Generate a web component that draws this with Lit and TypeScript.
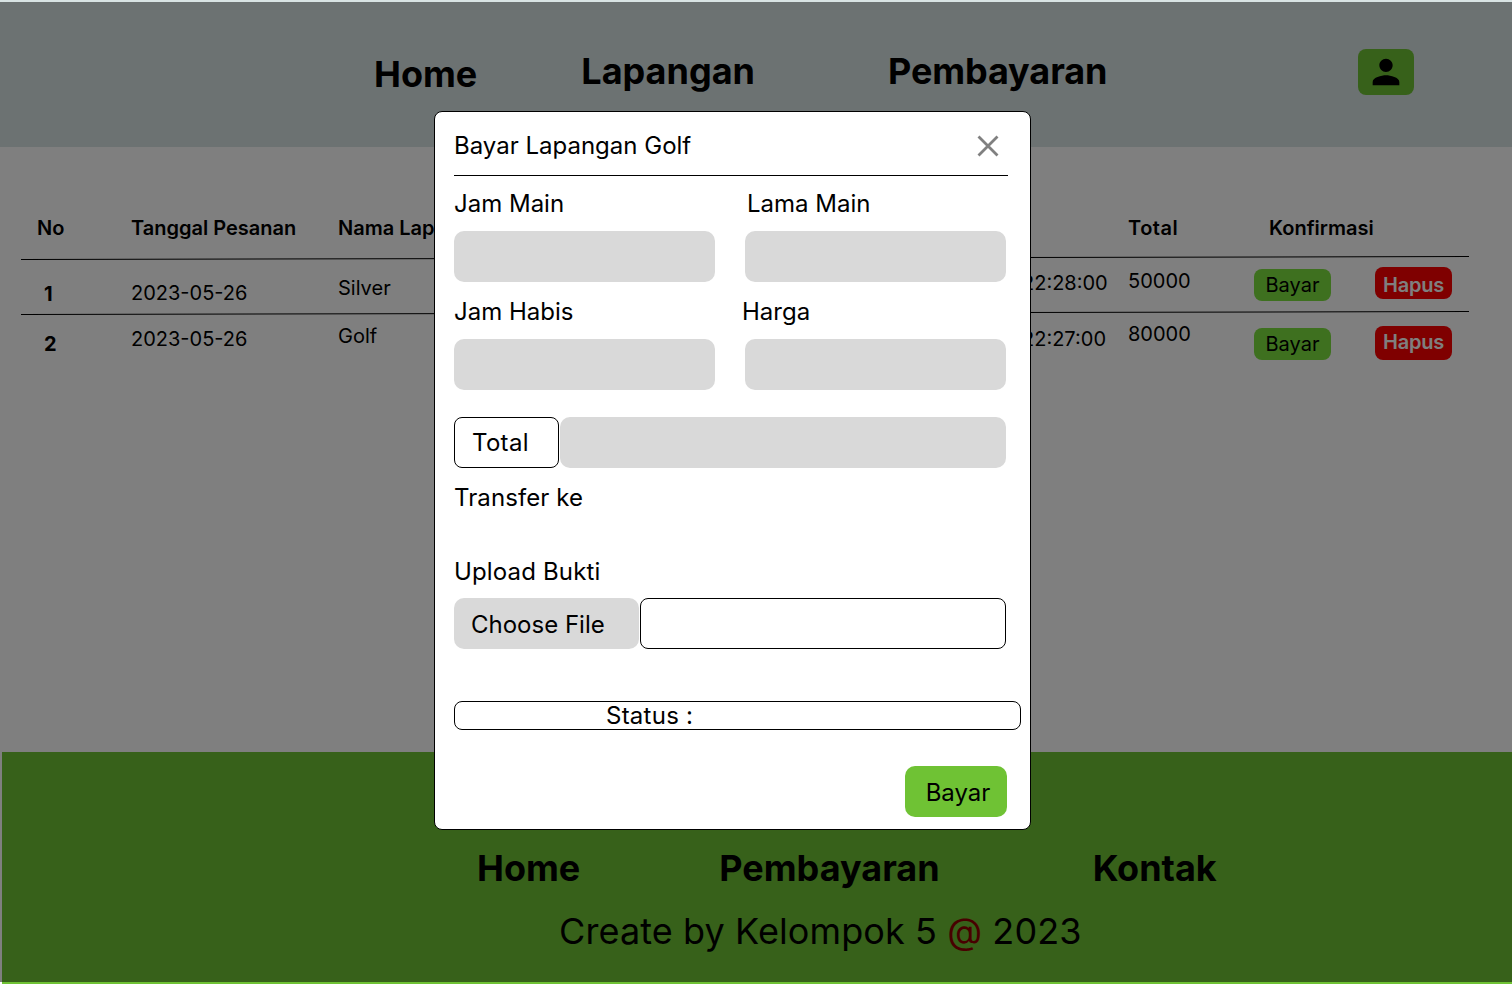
import { LitElement, html, css } from "lit";
import { customElement } from "lit/decorators.js";

// margin-top of each cell inside its row, taken from the picture
const rows = [
  { no: "1", date: "2023-05-26", name: "Silver", time: "22:28:00", total: "50000", tops: [23, 22, 17, 12, 10, 10, 8], height: 54 },
  { no: "2", date: "2023-05-26", name: "Golf", time: "22:27:00", total: "80000", tops: [18, 13, 10, 13, 8, 14, 12], height: 60 },
];

@customElement("app-root")
export class AppRoot extends LitElement {
  static styles = css`
    :host {
      display: block;
      position: relative;
      width: 1512px;
      height: 984px;
      overflow: hidden;
      background: #fff;
      font-family: Inter, "Liberation Sans", sans-serif;
      color: #000;
    }

    .top {
      display: flex;
      align-items: center;
      height: 147px;
      padding: 0 0 6px 374px;
      box-sizing: border-box;
      background: #d9e4e4;
      font-size: 36px;
      font-weight: 700;
    }
    .top .home {
      margin-top: 6px;
    }
    .top .lapangan {
      margin-left: 104px;
    }
    .top .pembayaran {
      margin-left: 133px;
      letter-spacing: -0.1px;
    }
    .user {
      display: flex;
      align-items: center;
      justify-content: center;
      width: 56px;
      height: 46px;
      margin-left: 251px;
      margin-top: 3px;
      border-radius: 8px;
      background: #6fc234;
    }

    .content {
      height: 605px;
      padding: 69px 0 0 21px;
      box-sizing: border-box;
    }
    .row {
      display: grid;
      grid-template-columns: 94px 207px 684px 106px 126px 121px 77px;
      padding-left: 16px;
      font-size: 20px;
      line-height: 24px;
    }
    .row.heads {
      height: 42px;
      font-weight: 600;
    }
    .row.heads .konfirmasi {
      grid-column: 6 / span 2;
      margin-left: 15px;
    }
    .row.heads .total-head {
      grid-column: 5;
      letter-spacing: 0.5px;
    }
    .no {
      font-weight: 700;
      margin-left: 7px;
    }
    .line {
      width: 1448px;
      height: 1px;
      background: #000;
      transform: translateY(-0.5px) rotate(-0.11deg);
    }
    .pill {
      width: 77px;
      height: 32px;
      line-height: 32px;
      border-radius: 8px;
      text-align: center;
    }
    .pill.pay {
      background: #7ce03e;
    }
    .pill.del {
      background: #ff0000;
      color: #fff;
      font-weight: 600;
      letter-spacing: -0.2px;
    }
    .pill.del.low {
      line-height: 36px;
    }
    .pill.del.tall {
      height: 34px;
    }

    .foot {
      height: 232px;
      margin-left: 2px;
      padding: 94px 0 0 475px;
      box-sizing: border-box;
      background: #6fc234;
      font-size: 36px;
      line-height: 44px;
    }
    .foot nav {
      display: flex;
      font-weight: 700;
    }
    .foot nav span:nth-child(2) {
      margin-left: 139px;
    }
    .foot nav span:nth-child(3) {
      margin-left: 153px;
    }
    .foot p {
      margin: 19px 0 0 82px;
      letter-spacing: 0.1px;
    }
    .foot em {
      font-style: normal;
      color: #900000;
    }

    .backdrop {
      position: absolute;
      inset: 2px 0;
      background: rgba(0, 0, 0, 0.5);
    }

    .modal {
      position: absolute;
      left: 434px;
      top: 111px;
      width: 597px;
      height: 719px;
      padding-left: 19px;
      box-sizing: border-box;
      border: 1px solid #000;
      border-radius: 8px;
      background: #fff;
      font-size: 24px;
      line-height: 29px;
    }
    .title {
      display: flex;
      align-items: flex-end;
      justify-content: space-between;
      width: 554px;
      height: 63px;
      padding-bottom: 15px;
      box-sizing: border-box;
    }
    .title svg {
      margin: 0 6px 0 0;
    }
    .rule {
      width: 554px;
      height: 1px;
      background: #000;
    }
    .fields {
      display: grid;
      grid-template-columns: 261px 261px;
      column-gap: 30px;
    }
    .label {
      margin-top: 13px;
    }
    .label.second {
      margin-top: 15px;
    }
    .label.lama {
      margin-left: 2px;
    }
    .label.harga {
      margin-left: -3px;
    }
    .box {
      height: 51px;
      margin-top: 13px;
      border-radius: 10px;
      background: #d9d9d9;
    }
    .total {
      display: flex;
      gap: 1px;
      width: 552px;
      margin-top: 27px;
    }
    .total .tag {
      width: 105px;
      height: 51px;
      padding-left: 17px;
      box-sizing: border-box;
      border: 1px solid #000;
      border-radius: 8px;
      line-height: 49px;
      letter-spacing: 0.3px;
    }
    .total .box {
      flex: 1;
      margin-top: 0;
    }
    .transfer {
      margin: 15px 0 0 0;
      letter-spacing: 0.1px;
    }
    .upload {
      margin-top: 45px;
      letter-spacing: 0.15px;
    }
    .file {
      display: flex;
      gap: 1px;
      width: 552px;
      margin-top: 12px;
    }
    .file .choose {
      width: 185px;
      height: 51px;
      padding-left: 17px;
      box-sizing: border-box;
      border-radius: 10px;
      background: #d9d9d9;
      line-height: 53px;
    }
    .file .name {
      flex: 1;
      border: 1px solid #000;
      border-radius: 8px;
    }
    .status {
      width: 567px;
      height: 29px;
      margin-top: 52px;
      padding-left: 151px;
      box-sizing: border-box;
      border: 1px solid #000;
      border-radius: 8px;
      line-height: 27px;
      letter-spacing: 0.25px;
    }
    .submit {
      width: 102px;
      height: 51px;
      margin: 36px 0 0 451px;
      padding-left: 4px;
      box-sizing: border-box;
      border-radius: 10px;
      background: #6fc234;
      text-align: center;
      line-height: 53px;
    }
  `;

  render() {
    return html`
      <header class="top">
        <span class="home">Home</span>
        <span class="lapangan">Lapangan</span>
        <span class="pembayaran">Pembayaran</span>
        <div class="user">
          <svg width="40" height="40" viewBox="0 0 24 24" fill="#000">
            <path d="M12 12c2.21 0 4-1.79 4-4s-1.79-4-4-4-4 1.79-4 4 1.79 4 4 4zm0 2c-2.67 0-8 1.34-8 4v2h16v-2c0-2.66-5.33-4-8-4z" />
          </svg>
        </div>
      </header>

      <section class="content">
        <div class="row heads">
          <span>No</span>
          <span>Tanggal Pesanan</span>
          <span>Nama Lapangan</span>
          <span class="total-head">Total</span>
          <span class="konfirmasi">Konfirmasi</span>
        </div>
        <div class="line"></div>
        ${rows.map(
          (r) => html`
            <div class="row" style="height:${r.height}px">
              <span class="no" style="margin-top:${r.tops[0]}px">${r.no}</span>
              <span style="margin-top:${r.tops[1]}px">${r.date}</span>
              <span style="margin-top:${r.tops[2]}px">${r.name}</span>
              <span style="margin-top:${r.tops[3]}px">${r.time}</span>
              <span style="margin-top:${r.tops[4]}px">${r.total}</span>
              <div class="pill pay" style="margin-top:${r.tops[5]}px">Bayar</div>
              <div class="pill del ${r.no === "1" ? "low" : "tall"}" style="margin-top:${r.tops[6]}px">Hapus</div>
            </div>
            ${r.no === "1" ? html`<div class="line"></div>` : ""}
          `,
        )}
      </section>

      <footer class="foot">
        <nav>
          <span>Home</span>
          <span>Pembayaran</span>
          <span>Kontak</span>
        </nav>
        <p>Create by Kelompok 5 <em>@</em> 2023</p>
      </footer>

      <div class="backdrop"></div>

      <div class="modal">
        <div class="title">
          <span>Bayar Lapangan Golf</span>
          <svg width="28" height="28" viewBox="0 0 28 28" stroke="#808080" stroke-width="2.8" fill="none">
            <path d="M4.5 4.5 23.5 23.5M23.5 4.5 4.5 23.5" />
          </svg>
        </div>
        <div class="rule"></div>
        <div class="fields">
          <div>
            <div class="label">Jam Main</div>
            <div class="box"></div>
          </div>
          <div>
            <div class="label lama">Lama Main</div>
            <div class="box"></div>
          </div>
          <div>
            <div class="label second">Jam Habis</div>
            <div class="box"></div>
          </div>
          <div>
            <div class="label second harga">Harga</div>
            <div class="box"></div>
          </div>
        </div>
        <div class="total">
          <div class="tag">Total</div>
          <div class="box"></div>
        </div>
        <div class="transfer">Transfer ke</div>
        <div class="upload">Upload Bukti</div>
        <div class="file">
          <div class="choose">Choose File</div>
          <div class="name"></div>
        </div>
        <div class="status">Status :</div>
        <div class="submit">Bayar</div>
      </div>
    `;
  }
}
